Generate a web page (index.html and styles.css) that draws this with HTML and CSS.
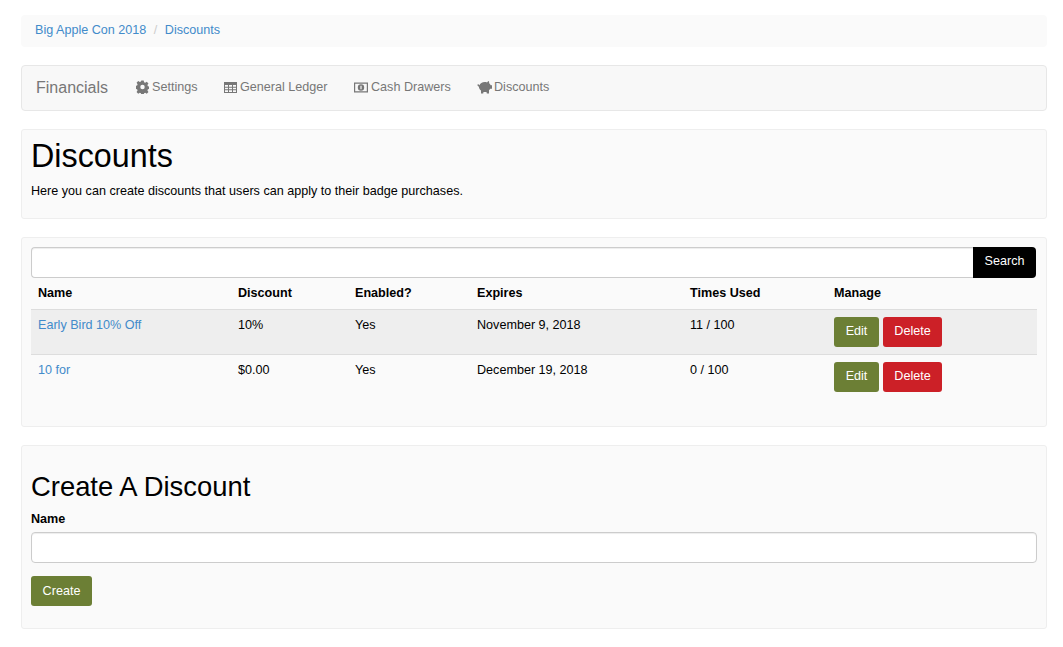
FILE: index.html
```html
<!DOCTYPE html>
<html lang="en">
<head>
<meta charset="utf-8">
<title>Discounts</title>
<link rel="stylesheet" href="styles.css">
</head>
<body>
<div class="page">
  <nav class="crumbs">
    <a href="#">Big Apple Con 2018</a><span class="sep">/</span><a href="#">Discounts</a>
  </nav>

  <div class="navbar">
    <span class="brand">Financials</span>
    <a class="navlink nav-settings" href="#">
      <svg class="ico" width="13" height="14" viewBox="0 0 14 14"><path fill="#777" fill-rule="evenodd" d="M5.700 0h2.600l.4 2 1.200.5 1.700-1.100 1.800 1.800-1.100 1.700.5 1.200 2 .4v2.600l-2 .4-.5 1.200 1.100 1.700-1.800 1.800-1.700-1.100-1.200.5-.4 2H5.700l-.4-2-1.200-.5-1.700 1.100-1.800-1.800 1.100-1.700-.5-1.200-2-.4V5.700l2-.4.5-1.200L.6 2.400 2.400.6l1.700 1.100 1.200-.5zM7 4.600a2.400 2.400 0 1 0 0 4.800 2.400 2.400 0 0 0 0-4.800z"/></svg>
      Settings</a>
    <a class="navlink nav-ledger" href="#">
      <svg class="ico" width="13" height="11" viewBox="0 0 13 11"><path fill="#777" fill-rule="evenodd" d="M0 0h13v11H0zM1 3v1.700h3V3zm4 0v1.700h3V3zm4 0v1.700h3V3zM1 5.700v1.600h3V5.700zm4 0v1.600h3V5.700zm4 0v1.600h3V5.700zM1 8.300V10h3V8.300zm4 0V10h3V8.300zm4 0V10h3V8.300z"/></svg>
      General Ledger</a>
    <a class="navlink nav-cash" href="#">
      <svg class="ico" width="14" height="11" viewBox="0 0 14 11"><path fill="#777" fill-rule="evenodd" d="M0 .5h14v10H0zM1.200 1.700v7.600h11.600V1.700zM7 2.300a3.200 3.200 0 1 1 0 6.400 3.200 3.200 0 0 1 0-6.400zM6.400 3.800v3.400h1.200V3.800z"/></svg>
      Cash Drawers</a>
    <a class="navlink nav-disc" href="#">
      <svg class="ico" width="16" height="13" viewBox="0 0 15 13"><path fill="#777" d="M11.500 0l.2 2.300c.7.500 1.200 1.200 1.500 2h1.300v3.500h-1.700c-.4.600-.8 1-1.300 1.400V12.500H9.300l-.3-1.500H6l-.3 1.500H3.500V9.500C2.200 8.600 1.400 7.300 1.400 5.800c0-.3-1.400-.5-1.400-1.500s.6-1.200 1-1.200c0 .6.200 1 .9 1.100C2.500 2.300 4.700 1 7.300 1c.9 0 1.500.1 2.200.4C10 .6 10.600.1 11.500 0z"/></svg>
      Discounts</a>
  </div>

  <section class="well well-head">
    <h1>Discounts</h1>
    <p>Here you can create discounts that users can apply to their badge purchases.</p>
  </section>

  <section class="well well-list">
    <form class="search">
      <input class="search-input" type="text" aria-label="Search">
      <button class="search-btn" type="button">Search</button>
    </form>
    <table class="grid">
      <colgroup>
        <col class="c-name"><col class="c-disc"><col class="c-en"><col class="c-exp"><col class="c-used"><col class="c-man">
      </colgroup>
      <thead>
        <tr><th>Name</th><th>Discount</th><th>Enabled?</th><th>Expires</th><th>Times Used</th><th>Manage</th></tr>
      </thead>
      <tbody>
        <tr class="odd">
          <td><a href="#">Early Bird 10% Off</a></td><td>10%</td><td>Yes</td><td>November 9, 2018</td><td>11 / 100</td>
          <td><button class="btn btn-olive" type="button">Edit</button><button class="btn btn-red" type="button">Delete</button></td>
        </tr>
        <tr>
          <td><a href="#">10 for</a></td><td>$0.00</td><td>Yes</td><td>December 19, 2018</td><td>0 / 100</td>
          <td><button class="btn btn-olive" type="button">Edit</button><button class="btn btn-red" type="button">Delete</button></td>
        </tr>
      </tbody>
    </table>
  </section>

  <section class="well well-form">
    <h2>Create A Discount</h2>
    <label class="lbl" for="name">Name</label>
    <input class="field" id="name" type="text">
    <button class="btn btn-olive btn-create" type="button">Create</button>
  </section>
</div>
</body>
</html>
```

FILE: styles.css
```css
* { box-sizing: border-box; }
html, body { margin: 0; padding: 0; }
body {
  background: #fff;
  color: #000;
  font-family: "Liberation Sans", Arial, sans-serif;
  font-size: 12.6px;
  line-height: 20px;
}
a { color: #428bca; text-decoration: none; }
.page { padding: 15px 16px 0 21px; }

.crumbs {
  height: 32px;
  padding: 5px 14px;
  background: #fafafa;
  border-radius: 4px;
  margin-bottom: 18px;
}
.sep { color: #ccc; padding: 0 7.500px; }

.navbar {
  display: flex;
  align-items: center;
  height: 46px;
  background: #f8f8f8;
  border: 1px solid #e7e7e7;
  border-radius: 4px;
  padding: 0 14px;
  margin-bottom: 18px;
}
.brand { color: #777; font-size: 16px; width: 100px; }
.navlink { color: #777; display: flex; align-items: center; gap: 3px; position: relative; top: -1px; }
.nav-settings { width: 88px; }
.nav-ledger { width: 130px; }
.nav-cash { width: 123px; }
.nav-disc { gap: 1px; }
.ico { display: block; }

.well {
  background: #fafafa;
  border: 1px solid #eee;
  border-radius: 3px;
  padding: 9px;
  margin-bottom: 18px;
}
.well-head { height: 90px; padding-top: 8px; }
.well-list { height: 190px; }
.well-form { height: 184px; }

h1 { font-size: 32.3px; font-weight: 400; line-height: 36px; margin: 0 0 7px; }
h2 { font-size: 27.4px; font-weight: 400; line-height: 32px; margin: 16px 0 5px; }
.well-head p { margin: 0; }

.search { display: flex; height: 31px; }
.search-input {
  flex: 1;
  height: 31px;
  min-width: 0;
  border: 1px solid #ccc;
  border-right: 0;
  border-radius: 4px 0 0 4px;
  background: #fff;
  box-shadow: inset 0 1px 1px rgba(0,0,0,.075);
}
.search-btn {
  width: 63px;
  height: 31px;
  border: 0;
  background: #000;
  color: #fff;
  font: 12.6px/20px "Liberation Sans", Arial, sans-serif;
  border-radius: 0 4px 4px 0;
  padding: 0 0 3px;
  margin-right: 1px;
}

.grid { width: 1006px; border-collapse: collapse; table-layout: fixed; }
.c-name { width: 200px; }
.c-disc { width: 117px; }
.c-en { width: 122px; }
.c-exp { width: 213px; }
.c-used { width: 144px; }
.c-man { width: 210px; }
th { text-align: left; font-weight: 700; height: 31px; padding: 5px 7px; border-bottom: 1px solid #ddd; }
td { vertical-align: top; height: 45px; padding: 5px 7px 4px; border-bottom: 1px solid #ddd; }
tbody td:last-child { padding-top: 7px; }
tbody tr:last-child td { border-bottom: 0; }
.odd td { background: #eee; }

.btn {
  display: inline-block;
  height: 30px;
  border: 0;
  border-radius: 3px;
  color: #fff;
  font: 12.6px/20px "Liberation Sans", Arial, sans-serif;
  padding: 0 0 2px;
  vertical-align: top;
}
.btn-olive { background: #6c7f35; width: 45px; }
.btn-red { background: #cc2027; width: 59px; margin-left: 4px; }
.btn-create { display: block; width: 61px; margin-top: 13px; padding-bottom: 0; }

.lbl { display: block; font-weight: 700; margin-bottom: 4px; position: relative; top: 1px; }
.field {
  display: block;
  width: 1006px;
  height: 31px;
  border: 1px solid #ccc;
  border-radius: 4px;
  background: #fff;
  box-shadow: inset 0 1px 1px rgba(0,0,0,.075);
}
```
